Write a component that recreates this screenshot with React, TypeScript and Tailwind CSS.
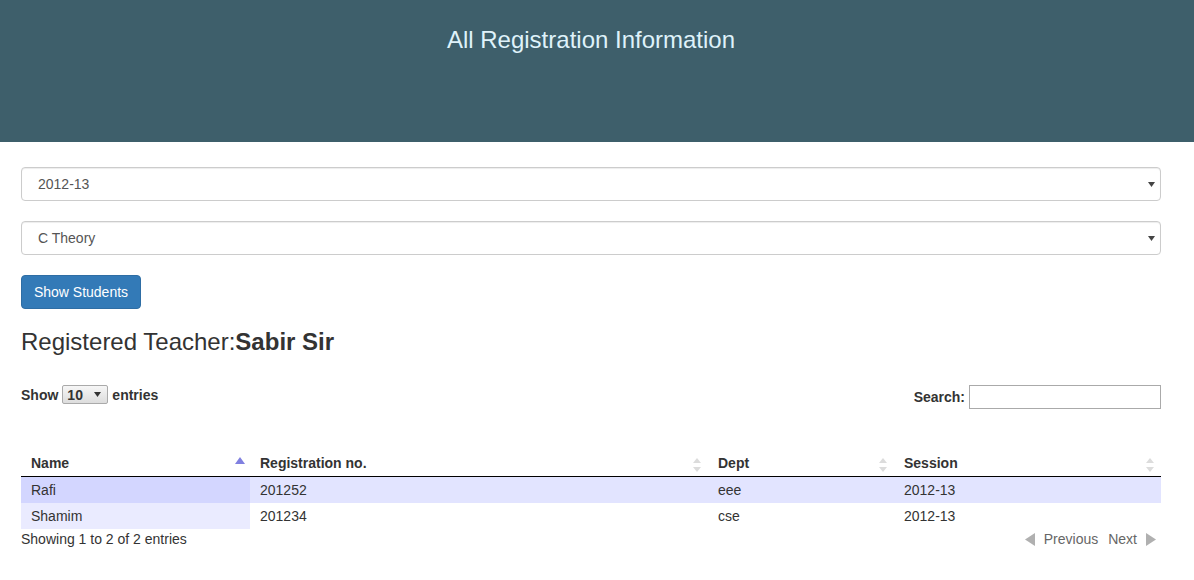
import React from "react";

const SortBoth = () => (
  <svg width="8" height="14" viewBox="0 0 8 14" className="absolute right-[7px] top-[8px]">
    <polygon points="4,0 8,5 0,5" fill="#dcdcdc" />
    <polygon points="0,9 8,9 4,14" fill="#dcdcdc" />
  </svg>
);

const SortAsc = () => (
  <svg width="10" height="7" viewBox="0 0 10 7" className="absolute right-[5px] top-[7px]">
    <polygon points="5,0 10,7 0,7" fill="#8080e0" />
  </svg>
);

const FakeSelect = ({ value }: { value: string }) => (
  <div className="flex h-[34px] w-full items-center justify-between rounded-[4px] border border-[#ccc] bg-white pl-[16px] pr-[5px] text-[14px] text-[#555] shadow-[inset_0_1px_1px_rgba(0,0,0,0.075)]">
    <span>{value}</span>
    <svg width="7" height="5" viewBox="0 0 7 5">
      <polygon points="0,0 7,0 3.5,5" fill="#444" />
    </svg>
  </div>
);

const rows = [
  { name: "Rafi", reg: "201252", dept: "eee", session: "2012-13" },
  { name: "Shamim", reg: "201234", dept: "cse", session: "2012-13" },
];

export default function App() {
  return (
    <div className="min-h-[580px] bg-white font-['Liberation_Sans',Arial,sans-serif] text-[14px] text-[#333]">
      <header className="h-[142px] bg-[#3e5f6b] pt-[26px]">
        <h1 className="w-[1182px] text-center text-[24px] leading-[28px] text-[#dff2fa]">All Registration Information</h1>
      </header>
      <main className="ml-[21px] w-[1140px] pt-[25px]">
        <div className="flex flex-col gap-[20px]">
          <FakeSelect value="2012-13" />
          <FakeSelect value="C Theory" />
          <div>
            <button className="h-[34px] w-[120px] rounded-[4px] border border-[#2e6da4] bg-[#337ab7] text-[14px] text-white">
              Show Students
            </button>
          </div>
        </div>
        <h3 className="mt-[20px] text-[24px] leading-[26px]">
          Registered Teacher:<b>Sabir Sir</b>
        </h3>
        <div className="mt-[24px] flex items-start justify-between">
          <div className="flex items-center gap-[4px] pt-[6px] text-[14px] font-bold leading-[18px]">
            <span>Show</span>
            <span className="flex h-[19px] w-[46px] items-center justify-between rounded-[2px] border border-[#aaa] bg-gradient-to-b from-[#f6f6f6] to-[#dddddd] pl-[4px] pr-[6px] text-[14px] font-bold text-[#333]">
              10
              <svg width="7" height="5" viewBox="0 0 7 5">
                <polygon points="0,0 7,0 3.5,5" fill="#333" />
              </svg>
            </span>
            <span>entries</span>
          </div>
          <div className="flex items-center gap-[4px] pt-[6px] font-bold">
            <span>Search:</span>
            <div className="h-[24px] w-[192px] border border-[#aaa] bg-white" />
          </div>
        </div>
        <table className="mt-[41px] w-full border-collapse text-left">
          <thead>
            <tr className="border-b border-black">
              <th className="relative w-[229px] py-[3px] pl-[10px] pr-[18px] font-bold leading-[20px]">
                Name
                <SortAsc />
              </th>
              <th className="relative w-[458px] py-[3px] pl-[10px] pr-[18px] font-bold leading-[20px]">
                Registration no.
                <SortBoth />
              </th>
              <th className="relative w-[186px] py-[3px] pl-[10px] pr-[18px] font-bold leading-[20px]">
                Dept
                <SortBoth />
              </th>
              <th className="relative py-[3px] pl-[10px] pr-[18px] font-bold leading-[20px]">
                Session
                <SortBoth />
              </th>
            </tr>
          </thead>
          <tbody>
            {rows.map((r, i) => (
              <tr key={r.name} className={i === 0 ? "bg-[#e2e4ff]" : "bg-white"}>
                <td className={`px-[10px] py-[3px] leading-[20px] ${i === 0 ? "bg-[#d3d6ff]" : "bg-[#eaebff]"}`}>{r.name}</td>
                <td className="px-[10px] py-[3px] leading-[20px]">{r.reg}</td>
                <td className="px-[10px] py-[3px] leading-[20px]">{r.dept}</td>
                <td className="px-[10px] py-[3px] leading-[20px]">{r.session}</td>
              </tr>
            ))}
          </tbody>
        </table>
        <div className="flex items-start justify-between">
          <div className="leading-[20px]">Showing 1 to 2 of 2 entries</div>
          <div className="flex items-center pr-[5px] leading-[20px]">
            <svg width="10" height="13" viewBox="0 0 10 13" className="mr-[9px]">
              <polygon points="10,0 10,13 0,6.5" fill="#b0b0b0" />
            </svg>
            <span className="text-[#666]">Previous</span>
            <span className="ml-[10px] text-[#666]">Next</span>
            <svg width="10" height="13" viewBox="0 0 10 13" className="ml-[9px]">
              <polygon points="0,0 0,13 10,6.5" fill="#b0b0b0" />
            </svg>
          </div>
        </div>
      </main>
    </div>
  );
}
